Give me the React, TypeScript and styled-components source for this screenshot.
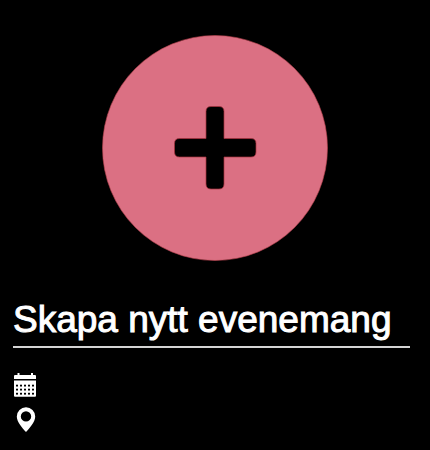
import React from "react";
import styled, { createGlobalStyle } from "styled-components";

const GlobalStyle = createGlobalStyle`
  body {
    margin: 0;
    background: #000;
    color: #fff;
    font-family: "Liberation Sans", Arial, Helvetica, sans-serif;
  }
`;

const Card = styled.main`
  display: flex;
  flex-direction: column;
  padding: 35px 20px 16px 13px;
`;

const CreateButton = styled.button`
  align-self: center;
  margin-left: 7px;
  padding: 0;
  border: 0;
  border-radius: 50%;
  background: none;
  color: #db7083;
  cursor: pointer;

  svg {
    display: block;
    width: 226px;
    height: 226px;
  }
`;

const Title = styled.h1`
  margin: 37px 0 0;
  padding-bottom: 4px;
  border-bottom: 2px solid #d4d4d4;
  font-size: 37px;
  font-weight: 400;
  line-height: 44px;
  white-space: nowrap;
  -webkit-text-stroke: 1px #fff;
`;

const Details = styled.ul`
  display: flex;
  flex-direction: column;
  gap: 9px;
  margin: 24px 0 0;
  padding: 0;
  list-style: none;
`;

const Detail = styled.li`
  display: flex;
  height: 26px;

  svg {
    display: block;
    width: 26px;
    height: 26px;
  }
`;

const PlusCircle = () => (
  <svg viewBox="0 0 226 226" aria-hidden="true">
    <circle cx="113" cy="113" r="112.5" fill="currentColor" stroke="#b8434f" strokeWidth="0.6" />
    <path
      d="M109 71.500h8q5 0 5 5v27h27q5 0 5 5v8.500q0 5-5 5h-27v27q0 5-5 5h-8q-5 0-5-5v-27h-26.500q-5 0-5-5v-8.500q0-5 5-5h26.500v-27q0-5 5-5z"
      fill="#000"
      stroke="#a8303e"
      strokeWidth="0.7"
    />
  </svg>
);

const holeColumns = [3, 7, 11, 15, 19];
const holeRows = [12.7, 16.7, 20.8];

const CalendarIcon = () => (
  <svg viewBox="0 0 26 26" role="img" aria-label="Datum">
    <path d="M1 7V4q0-1 1-1h2.500V1h2v2h11.500V1h2v2H22q1 0 1 1v3z" fill="#fff" />
    <path d="M1 8.500h22v15.300q0 1-1 1H2q-1 0-1-1z" fill="#fff" />
    {holeRows.map((y) =>
      holeColumns.map((x) => <rect key={`${x}-${y}`} x={x} y={y} width="2" height="1.8" fill="#000" />)
    )}
  </svg>
);

const PinIcon = () => (
  <svg viewBox="0 0 26 26" role="img" aria-label="Plats">
    <path
      fillRule="evenodd"
      fill="#fff"
      d="M13 .2a9.200 9.200 0 0 0-9.200 9.200c0 5.600 5.600 11.300 9.200 15.600 3.600-4.300 9.200-10 9.200-15.600A9.200 9.200 0 0 0 13 .2zM13 4.200a5.200 5.200 0 1 1 0 10.400 5.200 5.200 0 0 1 0-10.400z"
    />
  </svg>
);

export default function App() {
  return (
    <>
      <GlobalStyle />
      <Card>
        <CreateButton type="button" aria-label="Skapa nytt evenemang">
          <PlusCircle />
        </CreateButton>
        <Title>Skapa nytt evenemang</Title>
        <Details>
          <Detail>
            <CalendarIcon />
          </Detail>
          <Detail>
            <PinIcon />
          </Detail>
        </Details>
      </Card>
    </>
  );
}
